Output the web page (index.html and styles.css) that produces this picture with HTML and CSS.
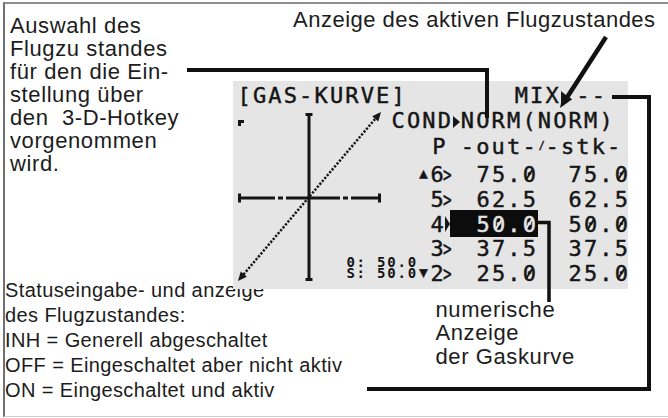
FILE: index.html
```html
<!DOCTYPE html>
<html lang="de">
<head>
<meta charset="utf-8">
<title>Gas-Kurve</title>
<link rel="stylesheet" href="styles.css">
</head>
<body>
<div class="frame">
  <div class="intro">Auswahl des<br>Flugzu standes<br>für den die Ein-<br>stellung über<br>den&nbsp; 3-D-Hotkey<br>vorgenommen<br>wird.</div>
  <div class="headline">Anzeige des aktiven Flugzustandes</div>
  <div class="lcd">
    <svg class="graph" viewBox="0 0 395 208">
      <g stroke="#151515" fill="none">
        <path d="M76 32V200" stroke-width="3"/>
        <path d="M72.5 33.5H79.5M72.5 198.5H79.5" stroke-width="3"/>
        <path d="M5 117H42M45 117H50M53 117H107M110 117H115M118 117H148" stroke-width="3"/>
        <path d="M6.5 112.5V121.5M146.5 112.5V121.5" stroke-width="3"/>
        <path d="M10.5 193.5L142.5 37.5" stroke-width="2.5" stroke-dasharray="2.2 1.6"/>
      </g>
      <g fill="#151515">
        <path d="M5 39H11V42H8V45H5Z"/>
        <polygon points="148,31 145.25,40.5 139.15,35.3"/>
        <polygon points="5,200 13.85,195.7 7.75,190.5"/>
      </g>
    </svg>
    <div class="lcd-line">[GAS-KURVE]       MIX<span class="cell-full"><span class="tri"></span></span>--</div>
    <div class="lcd-line">          COND<span class="cell-half"><span class="tri"></span></span>NORM(NORM)</div>
    <div class="lcd-line">            <span class="p-cell">P</span>-out-<span class="cell-half slash">/</span>-stk-</div>
    <div class="table">
      <span class="mark">▲</span><span class="idx">6</span><span class="sep"><span class="gt">&gt;</span></span><span class="v1">75.<span class="z">0</span></span><span class="v2">75.<span class="z">0</span></span>
      <span class="idx">5</span><span class="sep"><span class="gt">&gt;</span></span><span class="v1">62.5</span><span class="v2">62.5</span>
      <span class="idx">4</span><span class="sep"><span class="tri small"></span></span><span class="v1 hl">5<span class="z">0</span>.<span class="z">0</span></span><span class="v2">5<span class="z">0</span>.<span class="z">0</span></span>
      <span class="idx">3</span><span class="sep"><span class="gt">&gt;</span></span><span class="v1">37.5</span><span class="v2">37.5</span>
      <span class="mark down">▼</span><span class="idx">2</span><span class="sep"><span class="gt">&gt;</span></span><span class="v1">25.<span class="z">0</span></span><span class="v2">25.<span class="z">0</span></span>
      <div class="mini">0: 50.0<br>S: 50.0</div>
    </div>
  </div>
  <div class="status">Statuseingabe- und anzeige<br>des Flugzustandes:<br>INH = Generell abgeschaltet<br>OFF = Eingeschaltet aber nicht aktiv<br>ON = Eingeschaltet und aktiv</div>
  <div class="numeric">numerische<br>Anzeige<br>der Gaskurve</div>
</div>
<svg class="leaders" viewBox="0 0 668 418">
  <g fill="none" stroke="#111" stroke-width="4">
    <polyline points="187,70 487,70 487,118"/>
    <polyline points="612,97 649,97 649,389 367,389"/>
    <polyline points="537,222.5 549,222.5 549,302" stroke-width="3.5"/>
    <line x1="606" y1="37" x2="566" y2="99" stroke-width="4.5"/>
  </g>
  <polygon points="560,108 572.2,99.3 563,93.3" fill="#111"/>
</svg>
</body>
</html>
```
FILE: styles.css
```css
* { box-sizing: border-box; }

body {
  margin: 0;
  width: 668px;
  height: 418px;
  overflow: hidden;
  position: relative;
  background: #fff;
  color: #1c1c1c;
  font-family: "Liberation Sans", Arial, sans-serif;
}

.frame {
  margin: 2px 0 0 3px;
  width: 665px;
  height: 415px;
  border-top: 2px solid #8e8e8e;
  border-left: 2px solid #707070;
  border-bottom: 1px solid #cfcfcf;
  display: grid;
  grid-template-columns: 228px 395px 1fr;
  grid-template-rows: 77px 208px 1fr;
}

.intro {
  grid-column: 1;
  grid-row: 1 / 3;
  padding: 10.2px 0 0 5px;
  font-size: 22px;
  line-height: 23px;
  letter-spacing: 0.6px;
  white-space: nowrap;
}

.headline {
  grid-column: 2 / 4;
  grid-row: 1;
  padding: 5px 0 0 60px;
  font-size: 22px;
  line-height: 22.5px;
  letter-spacing: 0.5px;
  white-space: nowrap;
}

.lcd {
  grid-column: 2;
  grid-row: 2;
  position: relative;
  background: #e5e5e5;
  padding-top: 2px;
  font-family: "DejaVu Sans Mono", monospace;
  font-size: 22px;
  color: #151515;
  -webkit-text-stroke: 0.45px #151515;
}

.graph {
  position: absolute;
  left: 0;
  top: 0;
  width: 395px;
  height: 208px;
}

.lcd-line {
  position: relative;
  height: 25px;
  line-height: 25px;
  white-space: pre;
  letter-spacing: 2.155px;
  padding-left: 4.5px;
}

.cell-full {
  display: inline-block;
  width: 15.4px;
  letter-spacing: 0;
}

.cell-half {
  display: inline-block;
  width: 7.7px;
  letter-spacing: 0;
}

.tri {
  display: inline-block;
  width: 0;
  height: 0;
  border-left: 7.5px solid #151515;
  border-top: 6.5px solid transparent;
  border-bottom: 6.5px solid transparent;
}

.tri.small {
  margin-left: 2.5px;
  border-left-width: 5px;
  border-top-width: 8px;
  border-bottom-width: 8px;
}

.p-cell {
  display: inline-block;
  width: 38.5px;
  padding-left: 10px;
  letter-spacing: 0;
}

.slash {
  font-size: 10px;
  vertical-align: 5px;
  text-align: center;
}

.table {
  position: relative;
  margin-top: 5px;
  display: grid;
  grid-template-columns: 183.5px 14px 12px 7.5px 88px 30.5px 1fr;
  grid-auto-rows: 24.75px;
  line-height: 24.75px;
  white-space: pre;
}

.mark {
  grid-column: 2;
  font-size: 14px;
  line-height: 14px;
  text-align: center;
  margin-top: 3px;
}

.mark.down { margin-top: 3px; }

.idx { grid-column: 3; }

.sep { grid-column: 4; }

.gt {
  display: inline-block;
  transform: scaleX(0.65);
  transform-origin: left center;
}

.v1 {
  grid-column: 5;
  padding-left: 26.5px;
  letter-spacing: 2.155px;
}

.v2 {
  grid-column: 7;
  letter-spacing: 2.155px;
}

.z {
  position: relative;
}

.z::after {
  content: "";
  position: absolute;
  left: 5.6px;
  top: 6.6px;
  width: 2px;
  height: 12px;
  background: currentColor;
  transform: rotate(32deg);
}

.hl {
  background: #0c0c0c;
  color: #e5e5e5;
  -webkit-text-stroke-color: #e5e5e5;
  margin-top: -2.5px;
  height: 27px;
  padding-top: 2.5px;
}

.mini {
  grid-column: 1;
  grid-row: 4 / 6;
  justify-self: end;
  align-self: end;
  margin: 0 -1.5px 8.1px 0;
  font-weight: bold;
  font-size: 14px;
  line-height: 11px;
  letter-spacing: 1.8px;
  -webkit-text-stroke: 0;
}

.status {
  grid-column: 1 / 3;
  grid-row: 3;
  margin-top: -11.4px;
  font-size: 20px;
  line-height: 25px;
  letter-spacing: 0.4px;
  white-space: nowrap;
}

.numeric {
  grid-column: 2;
  grid-row: 3;
  margin: 8.6px 0 0 202.5px;
  font-size: 22px;
  line-height: 23.5px;
  letter-spacing: 0.6px;
  white-space: nowrap;
}

.leaders {
  position: absolute;
  left: 0;
  top: 0;
  width: 668px;
  height: 418px;
  pointer-events: none;
}
```
